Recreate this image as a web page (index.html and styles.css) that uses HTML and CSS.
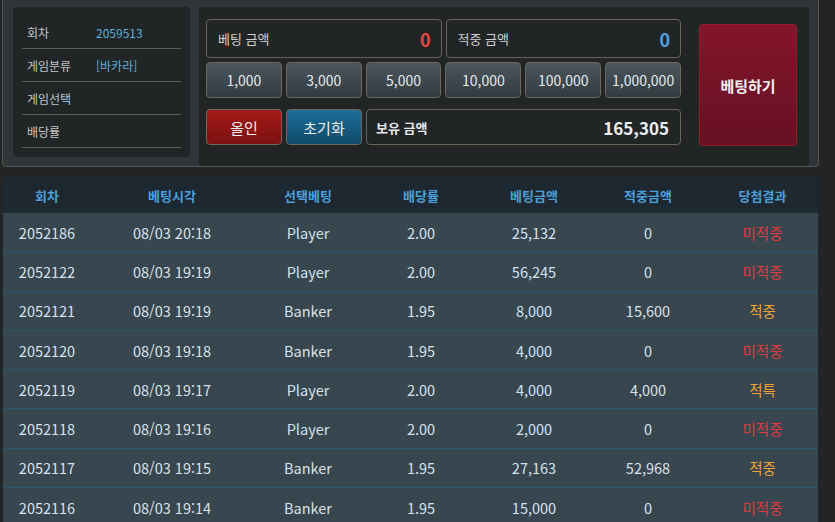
FILE: index.html
```html
<!DOCTYPE html>
<html lang="ko">
<head>
  <meta charset="UTF-8">
  <meta name="viewport" content="width=device-width, initial-scale=1.0">
  <title>베팅</title>
  <link rel="stylesheet" href="styles.css">
</head>
<body>
  <div class="wrap">
    <div class="bet-panel">
      <div class="info-box">
        <div class="info-row"><span class="info-label">회차</span><span class="info-value">2059513</span></div>
        <div class="info-row"><span class="info-label">게임분류</span><span class="info-value">[바카라]</span></div>
        <div class="info-row"><span class="info-label">게임선택</span><span class="info-value"></span></div>
        <div class="info-row"><span class="info-label">배당률</span><span class="info-value"></span></div>
      </div>

      <div class="bet-box">
        <div class="bet-left">
          <div class="amount-row">
            <div class="amount-box">
              <span class="amount-label">베팅 금액</span>
              <span class="amount-value red">0</span>
            </div>
            <div class="amount-box">
              <span class="amount-label">적중 금액</span>
              <span class="amount-value blue">0</span>
            </div>
          </div>
          <div class="chip-row">
            <button class="chip">1,000</button>
            <button class="chip">3,000</button>
            <button class="chip">5,000</button>
            <button class="chip">10,000</button>
            <button class="chip">100,000</button>
            <button class="chip">1,000,000</button>
          </div>
          <div class="action-row">
            <button class="allin-btn">올인</button>
            <button class="reset-btn">초기화</button>
            <div class="holding-box">
              <span class="holding-label">보유 금액</span>
              <span class="holding-value">165,305</span>
            </div>
          </div>
        </div>
        <button class="bet-btn">베팅하기</button>
      </div>
    </div>

    <table class="history">
      <thead>
        <tr>
          <th class="c1">회차</th>
          <th class="c2">베팅시각</th>
          <th class="c3">선택베팅</th>
          <th class="c4">배당률</th>
          <th class="c5">베팅금액</th>
          <th class="c6">적중금액</th>
          <th class="c7">당첨결과</th>
        </tr>
      </thead>
      <tbody>
        <tr><td>2052186</td><td>08/03 20:18</td><td>Player</td><td>2.00</td><td>25,132</td><td>0</td><td class="lose">미적중</td></tr>
        <tr><td>2052122</td><td>08/03 19:19</td><td>Player</td><td>2.00</td><td>56,245</td><td>0</td><td class="lose">미적중</td></tr>
        <tr><td>2052121</td><td>08/03 19:19</td><td>Banker</td><td>1.95</td><td>8,000</td><td>15,600</td><td class="win">적중</td></tr>
        <tr><td>2052120</td><td>08/03 19:18</td><td>Banker</td><td>1.95</td><td>4,000</td><td>0</td><td class="lose">미적중</td></tr>
        <tr><td>2052119</td><td>08/03 19:17</td><td>Player</td><td>2.00</td><td>4,000</td><td>4,000</td><td class="win">적특</td></tr>
        <tr><td>2052118</td><td>08/03 19:16</td><td>Player</td><td>2.00</td><td>2,000</td><td>0</td><td class="lose">미적중</td></tr>
        <tr><td>2052117</td><td>08/03 19:15</td><td>Banker</td><td>1.95</td><td>27,163</td><td>52,968</td><td class="win">적중</td></tr>
        <tr><td>2052116</td><td>08/03 19:14</td><td>Banker</td><td>1.95</td><td>15,000</td><td>0</td><td class="lose">미적중</td></tr>
      </tbody>
    </table>
  </div>
</body>
</html>
```

FILE: styles.css
```css
body {
  font-family: "Noto Sans CJK KR", "Noto Sans", sans-serif;
  margin: 0;
  background-color: #222426;
  color: #d8e2ea;
}
.wrap {
  width: 817px;
  margin-left: 2px;
}
.bet-panel {
  display: flex;
  align-items: flex-start;
  gap: 9px;
  background-color: #2f3538;
  border: 1px solid #56554f;
  border-top: none;
  border-radius: 0 0 4px 4px;
  padding: 7px 9px 0 10px;
  height: 159px;
}
.info-box {
  width: 159px;
  height: 132px;
  padding: 9px 9px;
  background-color: #212526;
  border-radius: 4px;
}
.info-row {
  display: flex;
  align-items: center;
  height: 32px;
  border-bottom: 1px solid #5f5c52;
  padding-left: 5px;
}
.info-label {
  width: 69px;
  font-size: 12px;
  color: #c4c4c4;
}
.info-value {
  font-size: 12px;
  color: #5cb0dc;
}
.bet-box {
  display: flex;
  align-items: flex-start;
  width: 603px;
  height: 147px;
  padding: 12px 0 0 7px;
  background-color: #212526;
  border-radius: 4px;
}
.bet-left {
  width: 475px;
  display: flex;
  flex-direction: column;
}
.amount-row {
  display: flex;
  gap: 4px;
}
.amount-box {
  flex: 1;
  display: flex;
  justify-content: space-between;
  align-items: center;
  height: 37px;
  padding: 0 10px 0 11px;
  border: 1px solid #6a6356;
  border-radius: 4px;
}
.amount-label {
  font-size: 13px;
  color: #d2d2d2;
}
.amount-value {
  font-size: 18px;
  font-weight: 700;
}
.red {
  color: #e8433f;
}
.blue {
  color: #4ea3e2;
}
.chip-row {
  display: flex;
  gap: 4px;
  margin-top: 4px;
}
.chip {
  flex: 1;
  height: 36px;
  padding: 0;
  font-family: inherit;
  font-size: 14px;
  color: #e2e8ec;
  background: linear-gradient(#4b565d, #333b40);
  border: 1px solid #6e675a;
  border-radius: 4px;
}
.action-row {
  display: flex;
  gap: 4px;
  margin-top: 11px;
}
.allin-btn,
.reset-btn {
  width: 76px;
  height: 36px;
  padding: 0;
  font-family: inherit;
  font-size: 15px;
  color: #eceff1;
  border: 1px solid #6e675a;
  border-radius: 4px;
}
.allin-btn {
  background: linear-gradient(#a41a18, #7c1210);
}
.reset-btn {
  background: linear-gradient(#1c6f99, #114a6b);
}
.holding-box {
  flex: 1;
  display: flex;
  justify-content: space-between;
  align-items: center;
  height: 34px;
  padding: 0 11px 0 9px;
  border: 1px solid #6a6356;
  border-radius: 4px;
}
.holding-label {
  font-size: 13px;
  font-weight: 700;
  color: #e6e6e6;
}
.holding-value {
  font-size: 17px;
  font-weight: 700;
  color: #eceeef;
}
.bet-btn {
  width: 98px;
  height: 122px;
  margin: 5px 0 0 18px;
  padding: 0;
  font-family: inherit;
  font-size: 15px;
  font-weight: 700;
  color: #f1f1f1;
  background: linear-gradient(#84152b, #661022);
  border: 1px solid #9a1d2f;
  border-radius: 4px;
}
.history {
  width: 815px;
  margin: 10px 0 0 1px;
  border-collapse: collapse;
  table-layout: fixed;
}
.history th {
  height: 36px;
  padding: 0;
  background-color: #1e2830;
  font-size: 13px;
  font-weight: 700;
  color: #4c9fd9;
}
.history td {
  height: 38.3px;
  padding: 0;
  text-align: center;
  font-size: 14.5px;
  color: #d8e2ea;
  background-color: #37464f;
  border-bottom: 1px solid #2a5670;
}
.c1 { width: 88px; }
.c2 { width: 162px; }
.c3 { width: 110px; }
.c4 { width: 116px; }
.c5 { width: 110px; }
.c6 { width: 118px; }
.c7 { width: 111px; }
.history td.lose {
  color: #e0393f;
}
.history td.win {
  color: #f0a335;
}
```
